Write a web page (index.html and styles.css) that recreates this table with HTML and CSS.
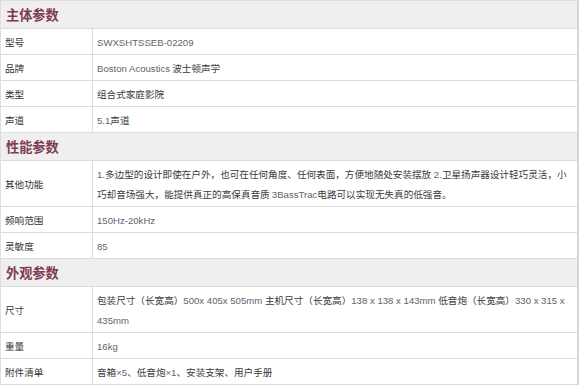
FILE: index.html
```html
<!DOCTYPE html>
<html lang="zh-CN">
<head>
<meta charset="utf-8">
<title>参数</title>
<link rel="stylesheet" href="styles.css">
</head>
<body>
<div class="spec">
  <div class="sec-title">主体参数</div>
  <div class="row"><div class="label">型号</div><div class="value"><span class="en">SWXSHTSSEB-02209</span></div></div>
  <div class="row"><div class="label">品牌</div><div class="value"><span class="en">Boston Acoustics</span> 波士顿声学</div></div>
  <div class="row"><div class="label">类型</div><div class="value">组合式家庭影院</div></div>
  <div class="row"><div class="label">声道</div><div class="value"><span class="en">5.1</span>声道</div></div>

  <div class="sec-title">性能参数</div>
  <div class="row"><div class="label">其他功能</div><div class="value"><span class="en">1.</span>多边型的设计即使在户外，也可在任何角度、任何表面，方便地随处安装摆放<span class="en"> 2.</span>卫星扬声器设计轻巧灵活，小巧却音场强大，能提供真正的高保真音质 <span class="en">3BassTrac</span>电路可以实现无失真的低强音。</div></div>
  <div class="row"><div class="label">频响范围</div><div class="value"><span class="en">150Hz-20kHz</span></div></div>
  <div class="row"><div class="label">灵敏度</div><div class="value"><span class="en">85</span></div></div>

  <div class="sec-title">外观参数</div>
  <div class="row"><div class="label">尺寸</div><div class="value">包装尺寸（长宽高）<span class="en">500x 405x 505mm </span>主机尺寸（长宽高）<span class="en">138 x 138 x 143mm </span>低音炮（长宽高）<span class="en">330 x 315 x 435mm</span></div></div>
  <div class="row"><div class="label">重量</div><div class="value"><span class="en">16kg</span></div></div>
  <div class="row"><div class="label">附件清单</div><div class="value">音箱<span class="en">×5</span>、低音炮<span class="en">×1</span>、安装支架、用户手册</div></div>
</div>
</body>
</html>
```

FILE: styles.css
```css
html, body {
  margin: 0;
  padding: 0;
  background: #ffffff;
}

body {
  font-family: "Noto Sans CJK SC", sans-serif;
  font-size: 9.6px;
  color: #3a3a3a;
}

.spec {
  width: 579px;
  box-sizing: border-box;
  border-top: 1px solid #dedede;
  border-left: 1px solid #dedede;
  border-right: 2px solid #d6d6d6;
}

.sec-title {
  height: 27px;
  line-height: 27px;
  background: #efefef;
  border-bottom: 1px solid #dcdcdc;
  padding-left: 5px;
  font-size: 13.2px;
  font-weight: bold;
  color: #7f3b52;
}

.row {
  display: flex;
  border-bottom: 1px solid #dcdcdc;
}

.label {
  width: 92px;
  flex: none;
  box-sizing: border-box;
  border-right: 1px solid #dcdcdc;
  padding-left: 4px;
  display: flex;
  align-items: center;
  line-height: 20px;
  color: #333333;
}

.value {
  flex: 1;
  height: auto;
  padding: 2.5px 4px 2.5px 4px;
  line-height: 20px;
  color: #3a3a3a;
}

.en {
  font-family: "Liberation Sans", sans-serif;
  line-height: 10px;
  color: #66606e;
}
```
